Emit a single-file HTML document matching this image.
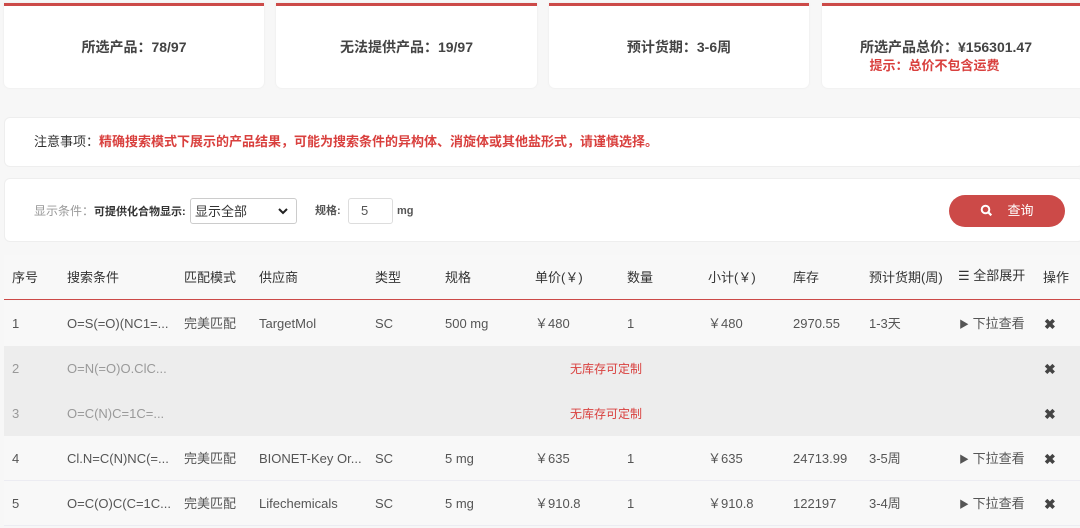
<!DOCTYPE html>
<html><head><meta charset="utf-8"><style>
*{box-sizing:border-box;margin:0;padding:0}
body{width:1080px;height:528px;background:#f7f7f7;font-family:"Liberation Sans","Noto Sans CJK SC",sans-serif;color:#333;position:relative;overflow:hidden;font-size:13px}
.card{position:absolute;top:3px;height:85px;background:#fff;border-top:3px solid #cc4a48;border-radius:0 0 6px 6px;box-shadow:0 0 2px #e8e8e8;text-align:center;font-weight:bold;font-size:14px;color:#444;line-height:18px}
.box{position:absolute;left:4px;width:1080px;background:#fff;border-radius:6px;border:1px solid #eee}
.red{color:#d9403e}
.t{position:absolute;white-space:nowrap;line-height:16px}
.row{position:absolute;left:4px;width:1076px;height:45px}
.x{font-size:14px;font-weight:bold;color:#444}
</style></head><body>
<div class="card" style="left:4px;width:260px"><div style="margin-top:32px">所选产品：78/97</div></div>
<div class="card" style="left:276px;width:261px"><div style="margin-top:32px">无法提供产品：19/97</div></div>
<div class="card" style="left:549px;width:260px"><div style="margin-top:32px">预计货期：3-6周</div></div>
<div class="card" style="left:822px;width:270px"><div style="margin-top:32px;margin-left:-22px">所选产品总价：¥156301.47</div><div class="red" style="font-size:13px;margin-top:1px;margin-left:-45px">提示：总价不包含运费</div></div>

<div class="box" style="top:117px;height:50px"><div class="t" style="left:29px;top:16px;font-size:13px">注意事项：<b class="red">精确搜索模式下展示的产品结果，可能为搜索条件的异构体、消旋体或其他盐形式，请谨慎选择。</b></div></div>

<div class="box" style="top:178px;height:64px">
<div class="t" style="left:29px;top:24px;font-size:12px;color:#999">显示条件：<b style="color:#333;font-size:11px">可提供化合物显示:</b></div>
<div class="t" style="left:185px;top:19px;width:107px;height:26px;border:1px solid #ccc;border-radius:3px;font-size:13px;padding:4px 4px;line-height:17px">显示全部<svg width="10" height="7" viewBox="0 0 10 7" style="position:absolute;right:8px;top:9px"><path d="M1 1l4 4 4-4" fill="none" stroke="#222" stroke-width="2"/></svg></div>
<div class="t" style="left:310px;top:24px;font-size:11px;font-weight:bold;color:#555">规格:</div>
<div class="t" style="left:343px;top:19px;width:45px;height:26px;border:1px solid #ddd;border-radius:3px;padding:4px 12px;font-size:13px;color:#555">5</div>
<div class="t" style="left:392px;top:24px;font-size:11px;font-weight:bold;color:#555">mg</div>
<div class="t" style="left:944px;top:16px;width:116px;height:32px;border-radius:16px;background:#cc4a48;color:#fff;font-size:13px;text-align:center;line-height:32px"><svg width="13" height="13" viewBox="0 0 13 13" style="vertical-align:-2px;margin-right:14px"><circle cx="5.5" cy="5.5" r="3.8" fill="none" stroke="#fff" stroke-width="2"/><path d="M8.3 8.3l3 3" stroke="#fff" stroke-width="2.2"/></svg>查询</div>
</div>

<div class="row" style="top:255px;height:45px;border-bottom:1px solid #cc4a48;background:#f8f8f8">
<div class="t" style="left:8px;top:15px">序号</div><div class="t" style="left:63px;top:15px">搜索条件</div><div class="t" style="left:180px;top:15px">匹配模式</div><div class="t" style="left:255px;top:15px">供应商</div><div class="t" style="left:371px;top:15px">类型</div><div class="t" style="left:441px;top:15px">规格</div><div class="t" style="left:531px;top:15px">单价(￥)</div><div class="t" style="left:623px;top:15px">数量</div><div class="t" style="left:704px;top:15px">小计(￥)</div><div class="t" style="left:789px;top:15px">库存</div><div class="t" style="left:865px;top:15px">预计货期(周)</div><div class="t" style="left:954px;top:13px">☰ 全部展开</div><div class="t" style="left:1039px;top:15px">操作</div>
</div>

<div class="row" style="top:301px;background:#f8f8f8;color:#555">
<div class="t" style="left:8px;top:15px">1</div><div class="t" style="left:63px;top:15px">O=S(=O)(NC1=...</div><div class="t" style="left:180px;top:15px">完美匹配</div><div class="t" style="left:255px;top:15px">TargetMol</div><div class="t" style="left:371px;top:15px">SC</div><div class="t" style="left:441px;top:15px">500 mg</div><div class="t" style="left:531px;top:15px">￥480</div><div class="t" style="left:623px;top:15px">1</div><div class="t" style="left:704px;top:15px">￥480</div><div class="t" style="left:789px;top:15px">2970.55</div><div class="t" style="left:865px;top:15px">1-3天</div><div class="t" style="left:955px;top:15px"><span style="font-size:10px">▶</span> 下拉查看</div><div class="t x" style="left:1040px;top:15px">✖</div>
</div>
<div class="row" style="top:346px;height:90px;background:#ededed;color:#999">
<div class="t" style="left:8px;top:15px">2</div><div class="t" style="left:63px;top:15px">O=N(=O)O.ClC...</div><div class="t red" style="left:566px;top:15px;font-size:12px">无库存可定制</div><div class="t x" style="left:1040px;top:15px">✖</div>
<div class="t" style="left:8px;top:60px">3</div><div class="t" style="left:63px;top:60px">O=C(N)C=1C=...</div><div class="t red" style="left:566px;top:60px;font-size:12px">无库存可定制</div><div class="t x" style="left:1040px;top:60px">✖</div>
</div>
<div class="row" style="top:436px;background:#f8f8f8;color:#555;border-bottom:1px solid #ececf2">
<div class="t" style="left:8px;top:15px">4</div><div class="t" style="left:63px;top:15px">Cl.N=C(N)NC(=...</div><div class="t" style="left:180px;top:15px">完美匹配</div><div class="t" style="left:255px;top:15px">BIONET-Key Or...</div><div class="t" style="left:371px;top:15px">SC</div><div class="t" style="left:441px;top:15px">5 mg</div><div class="t" style="left:531px;top:15px">￥635</div><div class="t" style="left:623px;top:15px">1</div><div class="t" style="left:704px;top:15px">￥635</div><div class="t" style="left:789px;top:15px">24713.99</div><div class="t" style="left:865px;top:15px">3-5周</div><div class="t" style="left:955px;top:15px"><span style="font-size:10px">▶</span> 下拉查看</div><div class="t x" style="left:1040px;top:15px">✖</div>
</div>
<div class="row" style="top:481px;background:#f8f8f8;color:#555;border-bottom:1px solid #ececf2">
<div class="t" style="left:8px;top:15px">5</div><div class="t" style="left:63px;top:15px">O=C(O)C(C=1C...</div><div class="t" style="left:180px;top:15px">完美匹配</div><div class="t" style="left:255px;top:15px">Lifechemicals</div><div class="t" style="left:371px;top:15px">SC</div><div class="t" style="left:441px;top:15px">5 mg</div><div class="t" style="left:531px;top:15px">￥910.8</div><div class="t" style="left:623px;top:15px">1</div><div class="t" style="left:704px;top:15px">￥910.8</div><div class="t" style="left:789px;top:15px">122197</div><div class="t" style="left:865px;top:15px">3-4周</div><div class="t" style="left:955px;top:15px"><span style="font-size:10px">▶</span> 下拉查看</div><div class="t x" style="left:1040px;top:15px">✖</div>
</div>
</body></html>
